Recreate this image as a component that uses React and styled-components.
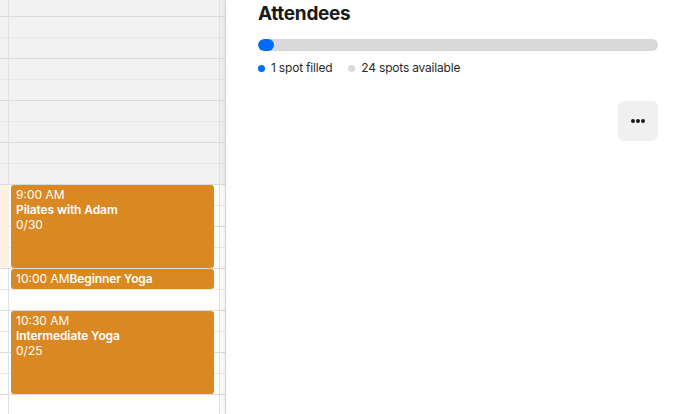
import React from 'react';
import styled, { createGlobalStyle } from 'styled-components';

const GlobalStyle = createGlobalStyle`
  html, body { margin: 0; padding: 0; width: 100%; height: 100%; overflow: hidden; background: #fff; }
  body { font-family: Inter, "Noto Sans", Arial, sans-serif; -webkit-font-smoothing: antialiased; }
  #root { height: 100%; }
  * { box-sizing: border-box; }
`;

const Page = styled.div`
  display: flex;
  width: 683px;
  height: 414px;
  overflow: hidden;
`;

const Calendar = styled.div`
  flex: none;
  width: 226px;
  height: 100%;
  display: grid;
  grid-template-columns: 9px 211px 1fr;
  overflow: hidden;
`;

const DayColumn = styled.div`
  position: relative;
  display: flex;
  flex-direction: column;
  border-right: 1px solid #e0e0e0;
`;

const Slot = styled.div`
  flex: none;
  height: ${(p) => (p.$first ? 17 : 21)}px;
  background: ${(p) => (p.$past ? '#f2f2f2' : '#ffffff')};
  border-bottom: 1px solid ${(p) => (p.$major ? '#dadada' : '#e8e8e8')};
`;

const Event = styled.div`
  position: absolute;
  left: ${(p) => (p.$sliver ? 0 : 2)}px;
  right: 5px;
  border-radius: 3px;
  background: ${(p) => (p.$faded ? '#fdf0df' : '#d98822')};
  color: #fff;
  padding: 2px 5px 0;
  font-size: 12px;
  line-height: 15px;
  display: flex;
  flex-direction: ${(p) => (p.$compact ? 'row' : 'column')};
  overflow: hidden;
  white-space: nowrap;
`;

const EventTime = styled.span`
  font-weight: 400;
`;

const EventTitle = styled.span`
  font-weight: 600;
  letter-spacing: -0.1px;
`;

const EventCount = styled.span`
  font-weight: 400;
`;

const Panel = styled.section`
  flex: 1;
  position: relative;
  z-index: 1;
  background: #fff;
  box-shadow: -3px 0 6px rgba(0, 0, 0, 0.07);
  padding: 2px 25px 0 32px;
  color: #1a1a1a;
`;

const Heading = styled.h2`
  margin: 0;
  font-size: 19px;
  line-height: 24px;
  font-weight: 700;
  letter-spacing: -0.3px;
`;

const Bar = styled.div`
  margin-top: 13px;
  height: 12px;
  border-radius: 6px;
  background: #d9d9d9;
  overflow: hidden;
`;

const BarFill = styled.div`
  height: 100%;
  border-radius: 6px;
  background: #006aff;
`;

const Legend = styled.div`
  margin-top: 10px;
  display: flex;
  gap: 16px;
  font-size: 12px;
  line-height: 14px;
  letter-spacing: -0.2px;
  color: #2a2a2a;
`;

const LegendItem = styled.div`
  display: flex;
  align-items: center;
  gap: 6px;
`;

const Dot = styled.span`
  width: 7px;
  height: 7px;
  border-radius: 50%;
  background: ${(p) => p.$color};
`;

const Actions = styled.div`
  margin-top: 26px;
  display: flex;
  justify-content: flex-end;
`;

const MoreButton = styled.button`
  width: 40px;
  height: 40px;
  border: none;
  border-radius: 6px;
  background: #f0f0f0;
  display: flex;
  align-items: center;
  justify-content: center;
  padding: 0;
  cursor: pointer;
`;

const SLOT_COUNT = 20;
const PAST_UNTIL = 8; // slots up to 9:00 are greyed
const BASE_Y = 184; // y of 9:00
const PX_PER_MIN = 84 / 60;

const slots = Array.from({ length: SLOT_COUNT }, (_, i) => i);

function Slots() {
  return slots.map((i) => (
    <Slot key={i} $first={i === 0} $major={i % 2 === 0} $past={i <= PAST_UNTIL} />
  ));
}

const events = [
  { start: 540, end: 600, time: '9:00 AM', title: 'Pilates with Adam', count: '0/30' },
  { start: 600, end: 615, time: '10:00 AM', title: 'Beginner Yoga', compact: true },
  { start: 630, end: 690, time: '10:30 AM', title: 'Intermediate Yoga', count: '0/25' },
];

function place(start, end) {
  const top = BASE_Y + (start - 540) * PX_PER_MIN + 1;
  const height = (end - start) * PX_PER_MIN - 1;
  return { top, height };
}

export default function App() {
  const filled = 1;
  const total = 25;
  return (
    <>
      <GlobalStyle />
      <Page>
        <Calendar>
          <DayColumn>
            <Slots />
            <Event $faded $sliver style={place(540, 600)} />
          </DayColumn>
          <DayColumn>
            <Slots />
            {events.map((e) => (
              <Event key={e.title} $compact={e.compact} style={place(e.start, e.end)}>
                <EventTime>{e.time}</EventTime>
                <EventTitle>{e.title}</EventTitle>
                {e.count && <EventCount>{e.count}</EventCount>}
              </Event>
            ))}
          </DayColumn>
          <DayColumn>
            <Slots />
          </DayColumn>
        </Calendar>
        <Panel>
          <Heading>Attendees</Heading>
          <Bar>
            <BarFill style={{ width: `${Math.max(16, (filled / total) * 400)}px` }} />
          </Bar>
          <Legend>
            <LegendItem>
              <Dot $color="#006aff" />
              1 spot filled
            </LegendItem>
            <LegendItem>
              <Dot $color="#d9d9d9" />
              24 spots available
            </LegendItem>
          </Legend>
          <Actions>
            <MoreButton aria-label="More actions">
              <svg width="14" height="4" viewBox="0 0 14 4">
                <circle cx="2" cy="2" r="2" fill="#1a1a1a" />
                <circle cx="7" cy="2" r="2" fill="#1a1a1a" />
                <circle cx="12" cy="2" r="2" fill="#1a1a1a" />
              </svg>
            </MoreButton>
          </Actions>
        </Panel>
      </Page>
    </>
  );
}
